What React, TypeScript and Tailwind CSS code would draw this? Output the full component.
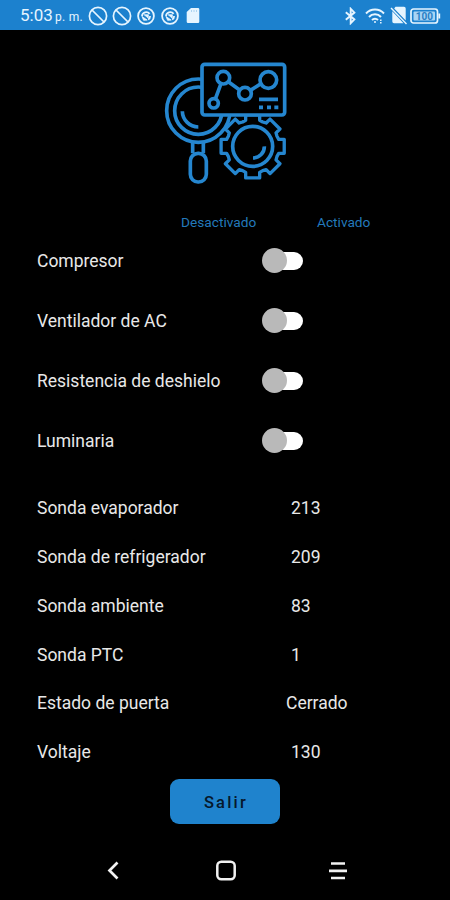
import { useState } from "react";
import { clsx } from "clsx";

const SWITCHES = ["Compresor", "Ventilador de AC", "Resistencia de deshielo", "Luminaria"];

type Reading = {
  label: string;
  value: string;
  centered?: boolean;
};

const READINGS: Reading[] = [
  { label: "Sonda evaporador", value: "213" },
  { label: "Sonda de refrigerador", value: "209" },
  { label: "Sonda ambiente", value: "83" },
  { label: "Sonda PTC", value: "1" },
  { label: "Estado de puerta", value: "Cerrado", centered: true },
  { label: "Voltaje", value: "130" },
];

const GEAR_TEETH = 8;

function gearPath(cx: number, cy: number, outer: number, inner: number) {
  const points: string[] = [];
  const step = 360 / GEAR_TEETH;
  for (let i = 0; i < GEAR_TEETH; i++) {
    const mid = i * step;
    const corners: [number, number][] = [
      [inner, mid - 15],
      [outer, mid - 12.5],
      [outer, mid + 12.5],
      [inner, mid + 15],
      [inner - 2, mid + step / 2],
    ];
    for (const [r, deg] of corners) {
      const a = (deg * Math.PI) / 180;
      points.push(`${(cx + r * Math.cos(a)).toFixed(1)} ${(cy + r * Math.sin(a)).toFixed(1)}`);
    }
  }
  return `M${points.join("L")}Z`;
}

function BlockedIcon() {
  return (
    <svg width="20" height="20" viewBox="0 0 20 20" fill="none" stroke="currentColor" strokeWidth="1.7">
      <circle cx="10" cy="10" r="8.6" />
      <path d="M4 4l12 12" />
    </svg>
  );
}

function SyncIcon() {
  return (
    <svg width="18" height="18" viewBox="0 0 18 18" fill="none" stroke="currentColor" strokeWidth="1.8">
      <circle cx="9" cy="9" r="7.9" />
      <path d="M5 9.2A4.2 4.2 0 0 1 12.6 6.9M13.1 9a4.2 4.2 0 0 1-2 3.6" />
      <path d="M5 9.5l5.2 3.6-3.6.2zM7.2 7.8l4 3.2.2-3.2z" fill="currentColor" strokeWidth="0.8" />
    </svg>
  );
}

function StatusBar() {
  return (
    <header className="flex h-[30px] shrink-0 items-center justify-between bg-[#1c81ce] pt-px pr-[9px] pl-5 text-[#e6f5ff]">
      <div className="flex items-center">
        <span className="w-[68px] pt-px text-[17px] leading-5 whitespace-nowrap">
          5:03 <span className="-ml-0.5 text-[12px] tracking-[0.3px]">p. m.</span>
        </span>
        <div className="flex items-center gap-1">
          <BlockedIcon />
          <BlockedIcon />
        </div>
        <div className="ml-[5px] flex items-center gap-1.5">
          <SyncIcon />
          <SyncIcon />
        </div>
        <svg className="ml-[7px]" width="14" height="17" viewBox="0 0 14 17">
          <path d="M5 1h7a1.3 1.3 0 0 1 1.3 1.3v12.4A1.3 1.3 0 0 1 12 16H2a1.3 1.3 0 0 1-1.3-1.3V5z" fill="currentColor" />
          <path d="M5.5 3v2M8 3v2M10.5 3v2" stroke="#a5d0ee" strokeWidth="0.9" />
        </svg>
      </div>
      <div className="flex items-center">
        <svg width="13" height="18" viewBox="0 0 13 18" fill="none" stroke="currentColor" strokeWidth="1.9">
          <path d="M1.8 5.2l8.6 7.2-3.7 3.8V1.8l3.7 3.8-8.6 7.2" />
        </svg>
        <svg className="ml-2" width="20" height="18" viewBox="0 0 20 18" fill="none" stroke="currentColor" strokeWidth="1.9">
          <path d="M1 6.5a12 12 0 0 1 18 0M4 10a8 8 0 0 1 12 0M7 13a4.2 4.2 0 0 1 6 0" />
          <circle cx="10" cy="15" r="1" fill="currentColor" stroke="none" />
          <path d="M15.8 12.5v4" strokeWidth="1.5" strokeDasharray="1.6 0.8" />
        </svg>
        <svg className="ml-[5px]" width="19" height="19" viewBox="0 0 19 19">
          <path d="M5.5 0.8H14a1.7 1.7 0 0 1 1.7 1.7V14.6L4.2 2.4z" fill="currentColor" />
          <path d="M2.3 5.2L13.5 17.2H4a1.7 1.7 0 0 1-1.7-1.7z" fill="currentColor" />
          <path d="M1 2l15.5 16" stroke="currentColor" strokeWidth="1.4" />
        </svg>
        <svg className="ml-px" width="31" height="16" viewBox="0 0 31 16" fill="none">
          <rect x="1" y="1" width="26.5" height="14" rx="2.5" stroke="currentColor" strokeWidth="1.7" />
          <rect x="3.5" y="3.5" width="21.5" height="9" rx="1" fill="#a9d5f5" />
          <path d="M29.3 5.5v5" stroke="currentColor" strokeWidth="1.8" />
          <text x="14.4" y="11.7" textAnchor="middle" fontSize="10" fontWeight="700" fill="#2a80c4">
            100
          </text>
        </svg>
      </div>
    </header>
  );
}

function DiagnosticsLogo() {
  return (
    <svg
      className="mx-auto mt-[22px] shrink-0"
      width="140"
      height="140"
      viewBox="0 0 420 420"
      fill="none"
      stroke="#2586cf"
      strokeWidth="11"
      strokeLinejoin="round"
    >
      {/* Magnifying glass */}
      <circle cx="130" cy="176" r="95" />
      <circle cx="130" cy="176" r="71" />
      <path d="M82 178a48 48 0 0 0 48 47" />
      <path d="M113 270v34M145 270v34" />
      <rect x="106" y="304" width="48" height="86" rx="23" />

      {/* Gear */}
      <path d={gearPath(293, 283, 97, 81)} fill="#000" strokeWidth="10" />
      <circle cx="293" cy="283" r="60" />
      <path d="M328 283a34 34 0 0 1-34 35" />

      {/* Chart panel */}
      <rect x="141" y="37" width="248" height="152" rx="8" fill="#000" />
      <circle cx="205" cy="77" r="19" />
      <circle cx="270" cy="125" r="19" />
      <circle cx="340" cy="84" r="25" />
      <circle cx="176" cy="154" r="14" />
      <path d="M198 95l-17 46M220 89l34 25M286 115l32-20" />
      <path d="M312 142h57M312 166h12M336 166h12M358 166h12" />
    </svg>
  );
}

function Toggle({ label }: { label: string }) {
  const [on, setOn] = useState(false);

  return (
    <button
      role="switch"
      aria-checked={on}
      aria-label={label}
      onClick={() => setOn(!on)}
      className="mb-px flex h-[25px] w-[54px] items-center"
    >
      <span className="ml-1 flex h-[18px] w-[37px] items-center rounded-full bg-white">
        <span
          className={clsx(
            "-ml-1 size-[25px] shrink-0 rounded-full bg-[#b9b9b9] transition-transform",
            on && "translate-x-[19px]",
          )}
        />
      </span>
    </button>
  );
}

function NavBar() {
  return (
    <nav className="mt-auto flex h-[60px] shrink-0 items-center justify-between pr-[102px] pl-[103px] text-[#f2f2f2]">
      <button>
        <svg width="20" height="24" viewBox="0 0 20 24" fill="none" stroke="currentColor" strokeWidth="2.7">
          <path d="M14.5 4.5L6.5 12.5l8 8" />
        </svg>
      </button>
      <button>
        <svg width="24" height="24" viewBox="0 0 24 24" fill="none" stroke="currentColor" strokeWidth="2.5">
          <rect x="3.3" y="3.8" width="17.4" height="17.4" rx="4" />
        </svg>
      </button>
      <button>
        <svg width="20" height="24" viewBox="0 0 20 24" fill="none" stroke="currentColor" strokeWidth="2.7">
          <path d="M3 5.5h14M1 12.8h18M3 20h14" />
        </svg>
      </button>
    </nav>
  );
}

export default function App() {
  return (
    <div className="flex h-[900px] w-[450px] flex-col overflow-hidden bg-black font-[Roboto,sans-serif] text-[17.5px] text-[#e8e8e8]">
      <StatusBar />
      <DiagnosticsLogo />

      <div className="mt-[21px] flex h-[18px] shrink-0 items-center pl-[181px] text-[13.7px] text-[#2379bb]">
        <span className="w-[136px]">Desactivado</span>
        <span>Activado</span>
      </div>

      {/* Relay switches */}
      <div className="px-[37px]">
        {SWITCHES.map((label) => (
          <div key={label} className="flex h-[60px] items-center">
            <span className="w-[225px] pt-px">{label}</span>
            <Toggle label={label} />
          </div>
        ))}
      </div>

      {/* Sensor readings */}
      <div className="mt-[13px] px-[37px]">
        {READINGS.map(({ label, value, centered }) => (
          <div key={label} className="flex h-[48.75px] items-center">
            <span className={centered ? "w-[249px]" : "w-[254px]"}>{label}</span>
            <span>{value}</span>
          </div>
        ))}
      </div>

      <button className="mx-auto mt-[2.5px] h-[45px] w-[110px] shrink-0 rounded-[9px] bg-[#1f83cd] pt-[3px] pl-[2px] text-[16.5px] font-medium tracking-[2.2px] text-[#06182b]">
        Salir
      </button>

      <NavBar />
    </div>
  );
}
